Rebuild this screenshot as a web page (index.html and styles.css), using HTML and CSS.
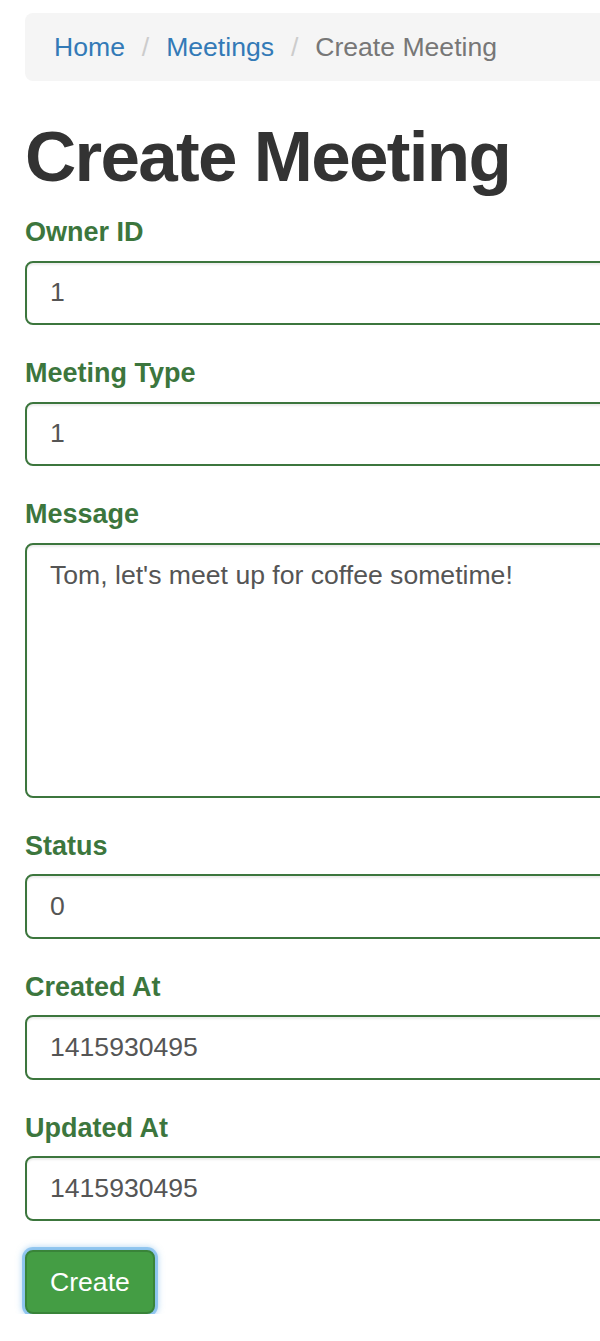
FILE: index.html
```html
<!DOCTYPE html>
<html lang="en">
<head>
    <meta charset="UTF-8">
    <meta name="viewport" content="width=device-width, initial-scale=1.0">
    <link rel="stylesheet" href="styles.css">
    <title>Create Meeting</title>
</head>
<body>
    <div class="container">
        <ul class="breadcrumb">
            <li><a href="#">Home</a></li>
            <li><a href="#">Meetings</a></li>
            <li class="active">Create Meeting</li>
        </ul>

        <h1>Create Meeting</h1>

        <form class="meeting-form">
            <div class="form-group">
                <label for="owner">Owner ID</label>
                <input type="text" id="owner" class="form-control" value="1">
            </div>
            <div class="form-group">
                <label for="type">Meeting Type</label>
                <input type="text" id="type" class="form-control" value="1">
            </div>
            <div class="form-group">
                <label for="message">Message</label>
                <textarea id="message" class="form-control" rows="6">Tom, let's meet up for coffee sometime!</textarea>
            </div>
            <div class="form-group">
                <label for="status">Status</label>
                <input type="text" id="status" class="form-control" value="0">
            </div>
            <div class="form-group">
                <label for="created">Created At</label>
                <input type="text" id="created" class="form-control" value="1415930495">
            </div>
            <div class="form-group">
                <label for="updated">Updated At</label>
                <input type="text" id="updated" class="form-control" value="1415930495">
            </div>
            <button type="submit" class="btn-success">Create</button>
        </form>
    </div>
</body>
</html>
```

FILE: styles.css
```css
html, body {
    margin: 0;
    overflow-x: hidden;
}

body {
    font-family: "Liberation Sans", Arial, Helvetica, sans-serif;
    font-size: 26.6px;
    line-height: 1.43;
    color: #333;
    background: #fff;
}

.container {
    width: 1100px;
    padding: 13px 0 0 25px;
}

.breadcrumb {
    list-style: none;
    margin: 0 0 38px;
    padding: 15px 29px;
    height: 38px;
    line-height: 38px;
    background-color: #f5f5f5;
    border-radius: 8px;
}

.breadcrumb li {
    display: inline-block;
}

.breadcrumb li + li:before {
    content: "/\00a0";
    padding: 0 9.5px;
    color: #ccc;
}

.breadcrumb a {
    color: #337ab7;
    text-decoration: none;
}

.breadcrumb .active {
    color: #777;
}

h1 {
    font-size: 71px;
    font-weight: bold;
    letter-spacing: -1.7px;
    line-height: 75px;
    margin: 38px 0 19px;
    color: #333;
}

.form-group {
    margin-bottom: 29px;
}

label {
    display: block;
    font-size: 27px;
    font-weight: bold;
    color: #3c763d;
    line-height: 38px;
    margin-bottom: 9.5px;
}

.form-control {
    display: block;
    box-sizing: border-box;
    width: 100%;
    height: 64.6px;
    padding: 11px 23px;
    font-family: inherit;
    font-size: 26.6px;
    line-height: 38px;
    color: #555;
    background: #fff;
    border: 2px solid #3c763d;
    border-radius: 8px;
    box-shadow: inset 0 2px 2px rgba(0, 0, 0, .075);
    margin: 0;
}

textarea.form-control {
    height: 255px;
    resize: none;
}

.btn-success {
    font-family: inherit;
    font-size: 26.6px;
    line-height: 38px;
    padding: 11px 23px;
    color: #fff;
    background-color: #449d44;
    border: 2px solid #398439;
    border-radius: 8px;
    box-shadow: 0 0 0 3px rgba(102, 175, 233, .6), 0 0 6px 3px rgba(102, 175, 233, .5);
    margin: 0;
}
```
